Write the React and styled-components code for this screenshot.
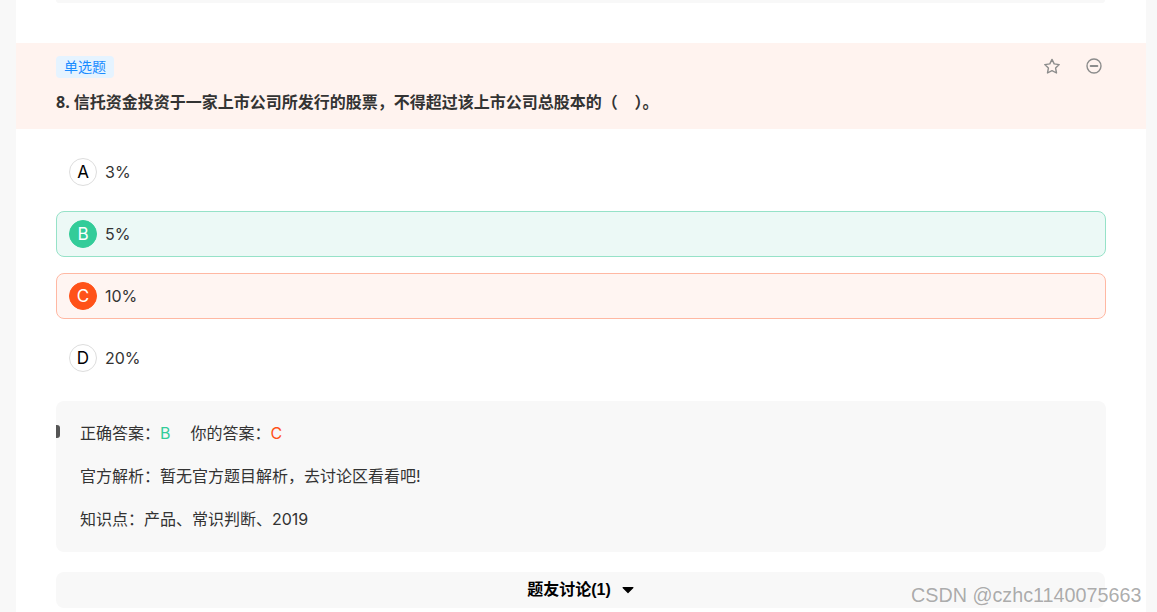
import React from "react";
import styled, { createGlobalStyle } from "styled-components";

const Global = createGlobalStyle`
  html, body { margin: 0; padding: 0; height: 612px; overflow: hidden; background: #f8f8f8; }
  body { font-family: "Inter", "Noto Sans CJK SC", sans-serif; color: #333; }
`;
const Page = styled.div`
  position: relative;
  width: 1157px;
  height: 612px;
  overflow: hidden;
  padding: 0 11px 0 16px;
  box-sizing: border-box;
`;
const Panel = styled.main`
  background: #fff;
  height: 612px;
  display: flex;
  flex-direction: column;
`;
const PreviousEnd = styled.div`
  height: 3px;
  margin: 0 41px 40px 40px;
  background: #f8f8f8;
  border-radius: 0 0 10px 10px;
`;
const Header = styled.header`
  position: relative;
  height: 86px;
  box-sizing: border-box;
  padding: 13px 40px 0;
  background: #fff3ef;
`;
const Tag = styled.span`
  display: inline-flex;
  align-items: center;
  justify-content: center;
  width: 58px;
  height: 22px;
  padding-bottom: 2px;
  box-sizing: border-box;
  background: #e5f3ff;
  border-radius: 4px;
  color: #1a8cff;
  font-size: 14px;
  line-height: 20px;
  font-family: "Noto Sans CJK SC", sans-serif;
`;
const Title = styled.h2`
  margin: 12px 0 0;
  font-size: 16px;
  line-height: 24px;
  font-weight: 700;
  color: #333;
  font-family: "Open Sans", "Noto Sans CJK SC", sans-serif;
  white-space: pre;
`;
const Actions = styled.div`
  position: absolute;
  top: 14px;
  right: 43px;
  display: flex;
  gap: 24px;
  color: #8c8c8c;
`;
const Options = styled.div`
  display: flex;
  flex-direction: column;
  gap: 16px;
  margin: 20px 40px 0;
`;
const tones = {
  none: { bg: "transparent", bd: "transparent", dot: "#fff", dotBd: "#ddd", txt: "#000" },
  right: { bg: "#ecf9f6", bd: "#96e2c8", dot: "#33cc99", dotBd: "#33cc99", txt: "#fff" },
  wrong: { bg: "#fff5f2", bd: "#ffb8a3", dot: "#ff5219", dotBd: "#ff5219", txt: "#fff" },
};
const Option = styled.div`
  display: flex;
  align-items: center;
  gap: 8px;
  height: 46px;
  box-sizing: border-box;
  padding: 0 12px;
  border: 1px solid ${(p) => tones[p.$tone].bd};
  background: ${(p) => tones[p.$tone].bg};
  border-radius: 8px;
  font-size: 16px;
  color: #333;
  font-family: "Inter", sans-serif;
`;
const Letter = styled.span`
  width: 28px;
  height: 28px;
  box-sizing: border-box;
  border-radius: 50%;
  display: flex;
  align-items: center;
  justify-content: center;
  border: 1px solid ${(p) => tones[p.$tone].dotBd};
  background: ${(p) => tones[p.$tone].dot};
  color: ${(p) => tones[p.$tone].txt};
  font-size: 17px;
`;
const Analysis = styled.section`
  position: relative;
  margin: 20px 40px 0;
  height: 151px;
  box-sizing: border-box;
  padding: 20px 24px 0;
  background: #f8f8f8;
  border-radius: 8px;
  font-size: 16px;
  color: #333;
  font-family: "Inter", "Noto Sans CJK SC", sans-serif;
`;
const Marker = styled.i`
  position: absolute;
  left: 0;
  top: 24px;
  width: 4px;
  height: 13px;
  background: #555;
  border-radius: 0 3px 3px 0;
`;
const Line = styled.p`
  margin: 0 0 19px;
  height: 24px;
  line-height: 24px;
  white-space: nowrap;
`;
const Mark = styled.span`
  color: ${(p) => p.$c};
  margin-right: ${(p) => p.$gap || 0}px;
`;
const Discussion = styled.div`
  margin: 20px 41px 0 40px;
  height: 36px;
  background: #f8f8f8;
  border-radius: 8px;
  display: flex;
  align-items: center;
  justify-content: center;
  gap: 11px;
  font-size: 16px;
  font-weight: 700;
  color: #000;
  font-family: "Liberation Sans", "Noto Sans CJK SC", sans-serif;
`;
const DiscussionLabel = styled.span`
  line-height: 36px;
  height: 36px;
`;
const Watermark = styled.div`
  position: absolute;
  left: 911px;
  top: 583px;
  font-family: "Liberation Sans", sans-serif;
  font-size: 19.75px;
  line-height: 24px;
  color: rgba(120, 120, 120, 0.62);
  white-space: nowrap;
`;

const Star = () => (
  <svg width="18" height="18" viewBox="0 0 18 18" fill="none" stroke="currentColor" strokeWidth="1.4" strokeLinejoin="round">
    <path d="M9 2.4l2.2 4.5 5 .7-3.6 3.5.9 4.9L9 13.7l-4.5 2.3.9-4.9L1.8 7.6l5-.7z" />
  </svg>
);
const Minus = () => (
  <svg width="18" height="18" viewBox="0 0 18 18" fill="none" stroke="currentColor">
    <circle cx="9" cy="9" r="7" strokeWidth="1.4" />
    <path d="M5.6 9h6.8" strokeWidth="1.8" strokeLinecap="round" />
  </svg>
);
const Caret = () => (
  <svg width="12" height="8" viewBox="0 0 12 8" fill="#000">
    <path d="M1 1h10a.6.6 0 0 1 .4 1L6.4 7a.6.6 0 0 1-.8 0L.6 2A.6.6 0 0 1 1 1z" />
  </svg>
);

const options = [
  ["A", "3%", "none"],
  ["B", "5%", "right"],
  ["C", "10%", "wrong"],
  ["D", "20%", "none"],
];

export default function App() {
  return (
    <Page>
      <Global />
      <Panel>
        <PreviousEnd />
        <Header>
          <Tag>单选题</Tag>
          <Title>8. 信托资金投资于一家上市公司所发行的股票，不得超过该上市公司总股本的（    ）。</Title>
          <Actions>
            <Star />
            <Minus />
          </Actions>
        </Header>
        <Options>
          {options.map(([l, t, tone]) => (
            <Option key={l} $tone={tone}>
              <Letter $tone={tone}>{l}</Letter>
              {t}
            </Option>
          ))}
        </Options>
        <Analysis>
          <Marker />
          <Line>
            正确答案：<Mark $c="#33cc99" $gap={20}>B</Mark>你的答案：<Mark $c="#ff5219">C</Mark>
          </Line>
          <Line>官方解析：暂无官方题目解析，去讨论区看看吧!</Line>
          <Line>知识点：产品、常识判断、2019</Line>
        </Analysis>
        <Discussion>
          <DiscussionLabel>题友讨论(1)</DiscussionLabel>
          <Caret />
        </Discussion>
      </Panel>
      <Watermark>CSDN @czhc1140075663</Watermark>
    </Page>
  );
}
